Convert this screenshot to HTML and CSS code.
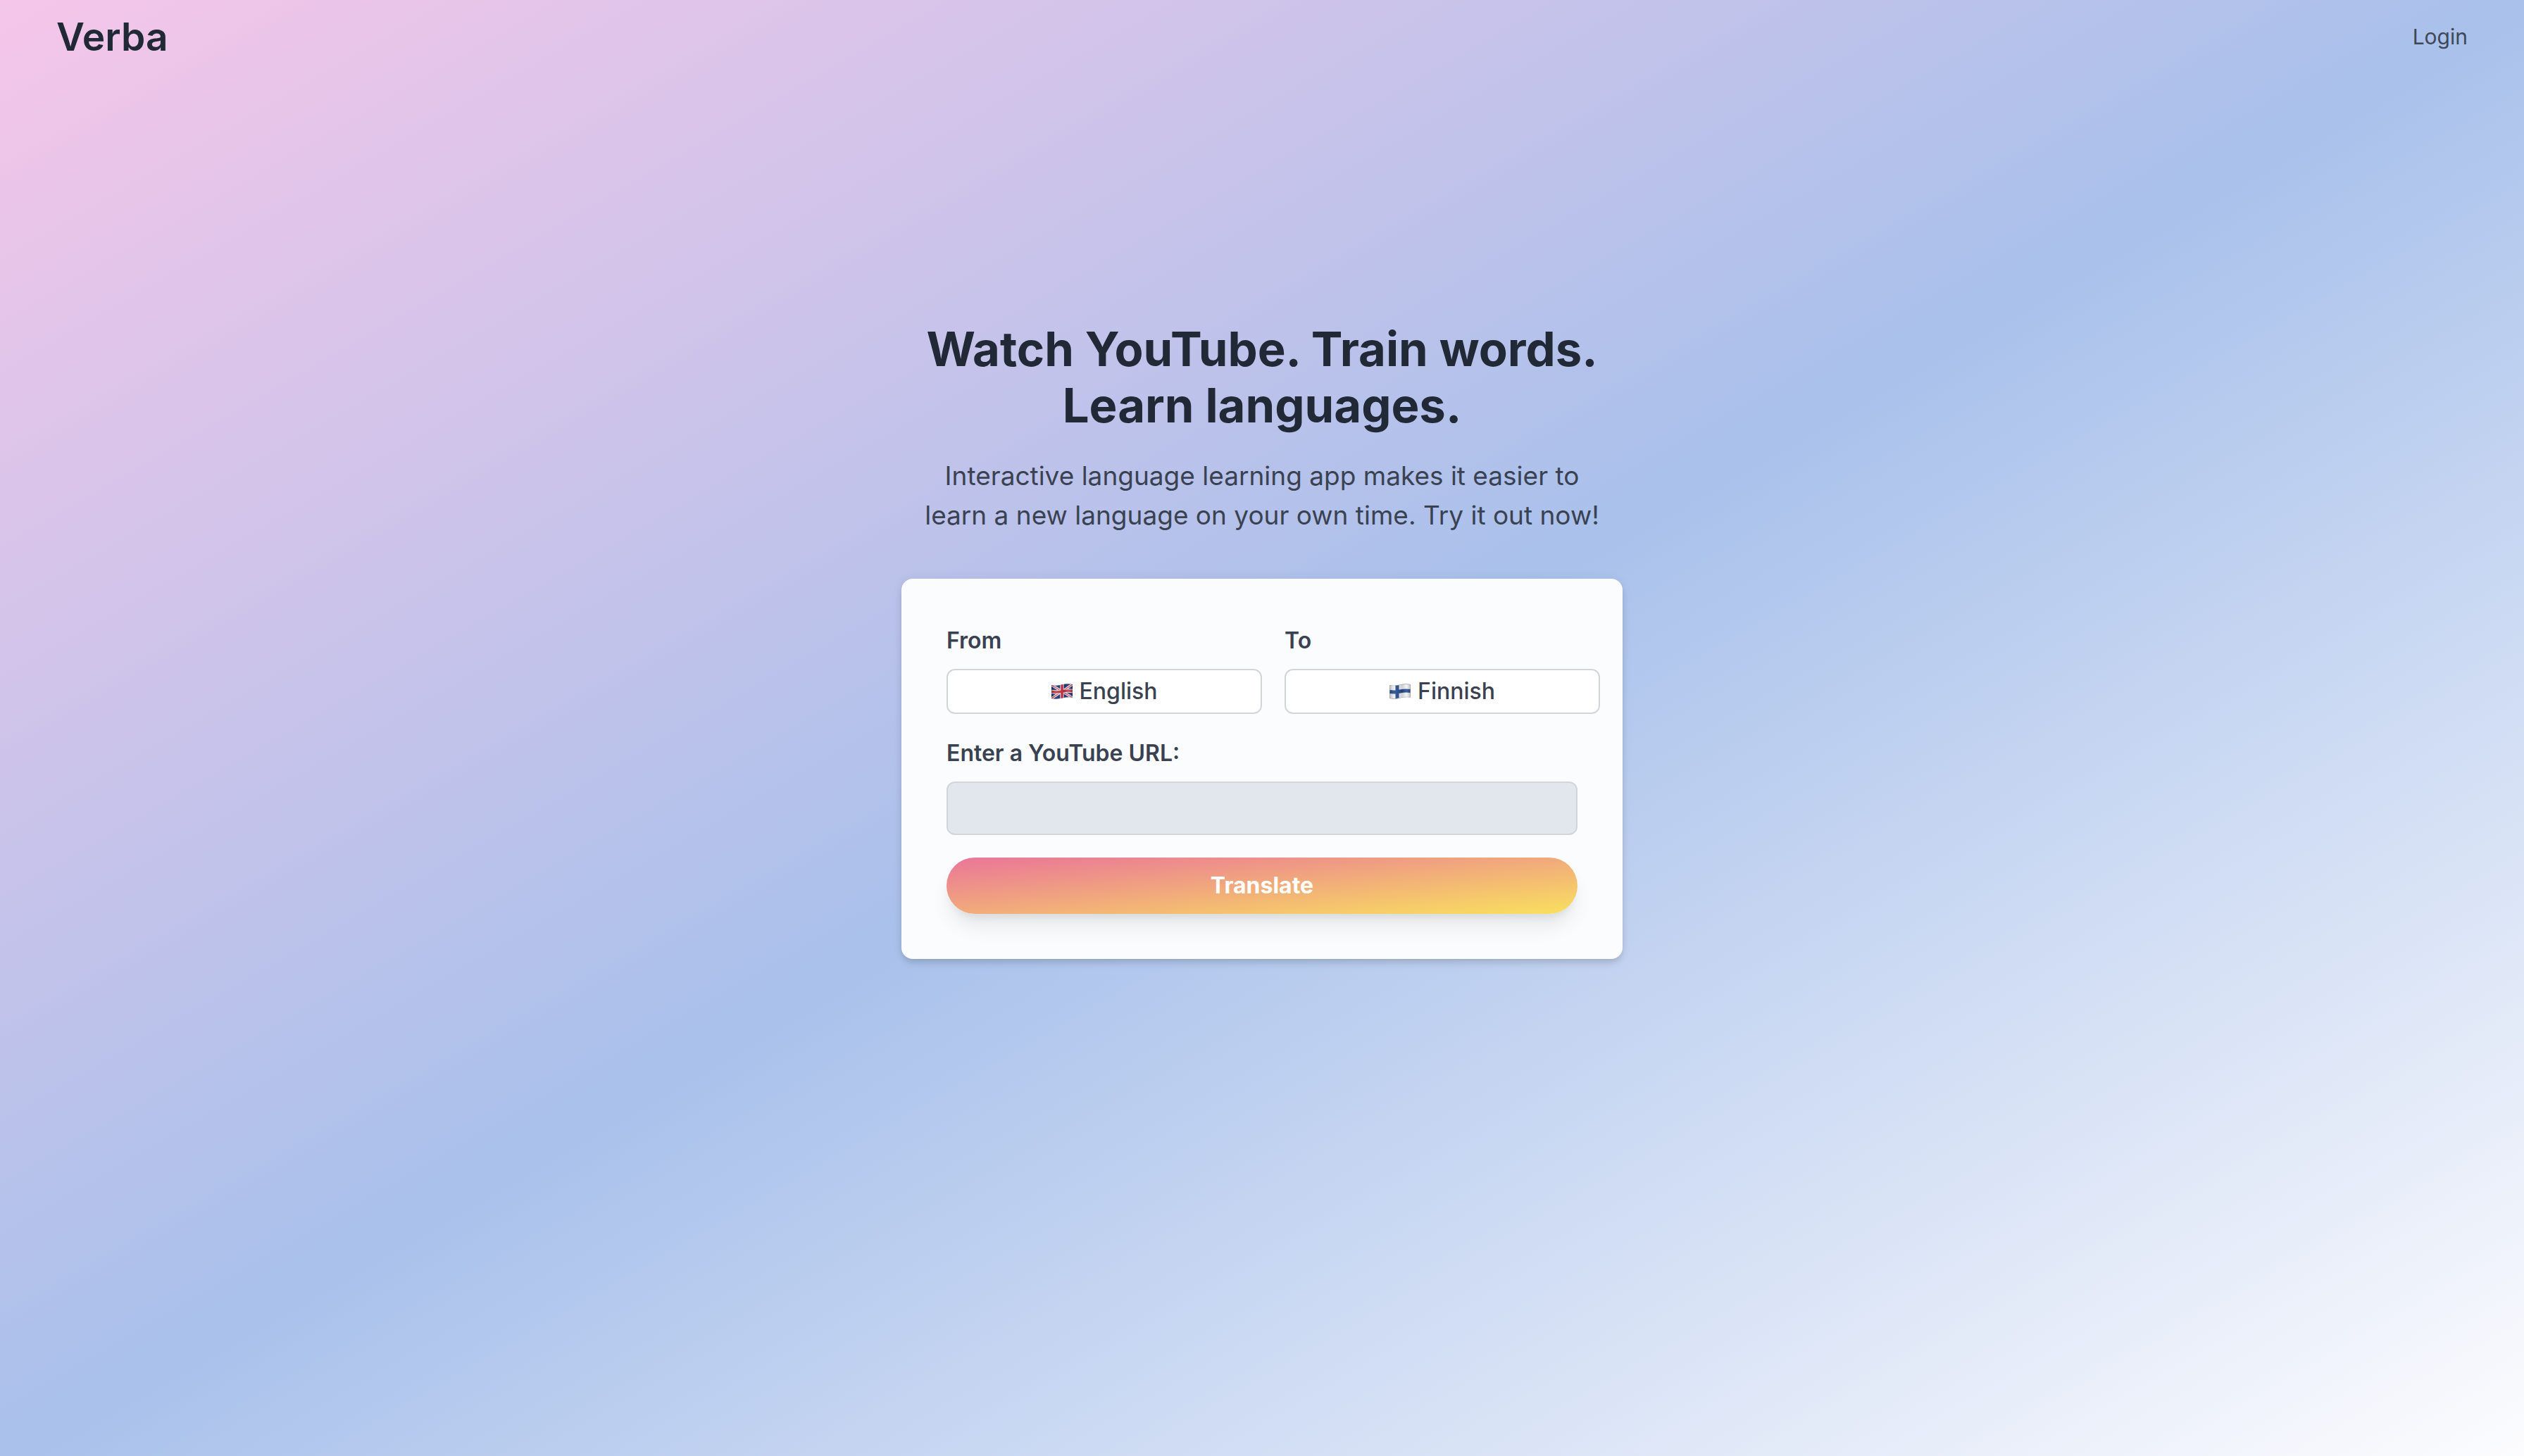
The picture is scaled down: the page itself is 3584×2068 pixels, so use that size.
FILE: index.html
```html
<!DOCTYPE html>
<html lang="en">
<head>
<meta charset="utf-8">
<meta name="viewport" content="width=device-width, initial-scale=1">
<title>Verba</title>
<link rel="stylesheet" href="styles.css">
</head>
<body>
<header class="nav">
  <a class="brand" href="#">Verba</a>
  <a class="login" href="#">Login</a>
</header>
<main class="main">
  <h1 class="title">Watch YouTube. Train words. Learn languages.</h1>
  <p class="lead">Interactive language learning app makes it easier to<br>learn a new language on your own time. Try it out now!</p>
  <form class="card">
    <div class="languages">
      <div class="field">
        <label class="label" for="from">From</label>
        <button class="picker" id="from" type="button" aria-haspopup="listbox">
          <svg class="flag" viewBox="0 0 30 22" aria-hidden="true">
            <defs>
              <clipPath id="wave"><path d="M0 2Q8 3.500 15 1.500T30 1V19.500Q22 18.500 15 20.500T0 21Z"/></clipPath>
              <linearGradient id="shade"><stop offset="0" stop-color="#000" stop-opacity=".25"/><stop offset=".25" stop-color="#fff" stop-opacity=".1"/><stop offset=".6" stop-color="#000" stop-opacity=".14"/><stop offset=".8" stop-color="#fff" stop-opacity=".12"/><stop offset="1" stop-color="#000" stop-opacity=".25"/></linearGradient>
            </defs>
            <g clip-path="url(#wave)">
              <path fill="#1c2f72" d="M0 0h30v22H0z"/>
              <path stroke="#f1f1f4" stroke-width="3.500" d="M0 2L30 20M0 21L30 1"/>
              <path stroke="#cf3a4b" stroke-width="1.200" d="M0 2L30 20M0 21L30 1"/>
              <path stroke="#f1f1f4" stroke-width="5.500" fill="none" d="M15 0V22M0 11.500Q8 12.500 15 11T30 10.500"/>
              <path stroke="#cb3345" stroke-width="3.500" fill="none" d="M15 0V22M0 11.500Q8 12.500 15 11T30 10.500"/>
              <path fill="url(#shade)" d="M0 0h30v22H0z"/>
            </g>
          </svg>
          English
        </button>
      </div>
      <div class="field">
        <label class="label" for="to">To</label>
        <button class="picker" id="to" type="button" aria-haspopup="listbox">
          <svg class="flag" viewBox="0 0 30 22" aria-hidden="true">
            <g clip-path="url(#wave)">
              <path fill="#f0f1f3" d="M0 0h30v22H0z"/>
              <path stroke="#234a8e" stroke-width="5" fill="none" d="M11 0V22M0 11.500Q8 12.500 15 11T30 10.500"/>
              <path fill="url(#shade)" d="M0 0h30v22H0z"/>
              <path fill="none" stroke="#9a9da3" d="M0 2Q8 3.500 15 1.500T30 1V19.500Q22 18.500 15 20.500T0 21Z"/>
            </g>
          </svg>
          Finnish
        </button>
      </div>
    </div>
    <div class="field">
      <label class="label" for="url">Enter a YouTube URL:</label>
      <input class="url" id="url" type="url">
    </div>
    <button class="submit" type="button">Translate</button>
  </form>
</main>
</body>
</html>
```
FILE: styles.css
```css
* {
  box-sizing: border-box;
}

body {
  margin: 0;
  min-height: 100vh;
  font-family: Inter, "Liberation Sans", sans-serif;
  font-size: 32px;
  line-height: 48px;
  color: #3a4252;
  background: linear-gradient(to bottom right, #f5c6e9, #a9c1eb 50%, #fcfcfe);
}

.nav {
  display: flex;
  align-items: center;
  justify-content: space-between;
  padding: 8px 80px;
}

.brand {
  font-size: 55px;
  font-weight: 600;
  line-height: 88px;
  color: #212936;
  text-decoration: none;
}

.login {
  color: #3f4857;
  font-size: 30px;
  text-decoration: none;
}

.main {
  width: 100%;
  max-width: 1024px;
  margin: 0 auto;
  padding: 352px 0 64px;
}

.title {
  margin: 0 0 32px;
  font-size: 67px;
  font-weight: 700;
  line-height: 80px;
  text-align: center;
  color: #212936;
}

.lead {
  margin: 0 0 62px;
  font-size: 37px;
  line-height: 56px;
  text-align: center;
}

.card {
  display: flex;
  flex-direction: column;
  gap: 32px;
  padding: 64px;
  border-radius: 16px;
  background: #fafcfe;
  box-shadow: 0 8px 12px -2px rgba(0, 0, 0, .1), 0 4px 8px -2px rgba(0, 0, 0, .06), 0 0 16px rgba(0, 0, 0, .06);
}

.languages {
  display: grid;
  grid-template-columns: 1fr 1fr;
  gap: 32px;
  margin-right: -32px;
}

.field {
  display: flex;
  flex-direction: column;
  gap: 16px;
}

.label {
  font-weight: 600;
}

.picker {
  display: flex;
  align-items: center;
  justify-content: center;
  gap: 10px;
  height: 64px;
  padding: 0 16px;
  border: 2px solid #d2d6da;
  border-radius: 12px;
  background: #fff;
  font: inherit;
  font-weight: 500;
  color: inherit;
}

.flag {
  width: 30px;
  height: 22px;
}

.url {
  width: 100%;
  height: 76px;
  padding: 0 16px;
  border: 2px solid #d2d6da;
  border-radius: 12px;
  background: #e2e7ee;
  font: inherit;
  color: inherit;
}

.submit {
  height: 80px;
  border: 0;
  border-radius: 40px;
  background: linear-gradient(to bottom right, #ea7599, #f9e05e);
  box-shadow: 0 20px 30px -6px rgba(0, 0, 0, .1), 0 8px 12px -4px rgba(0, 0, 0, .06);
  font: inherit;
  font-weight: 700;
  color: #fff;
}
```
